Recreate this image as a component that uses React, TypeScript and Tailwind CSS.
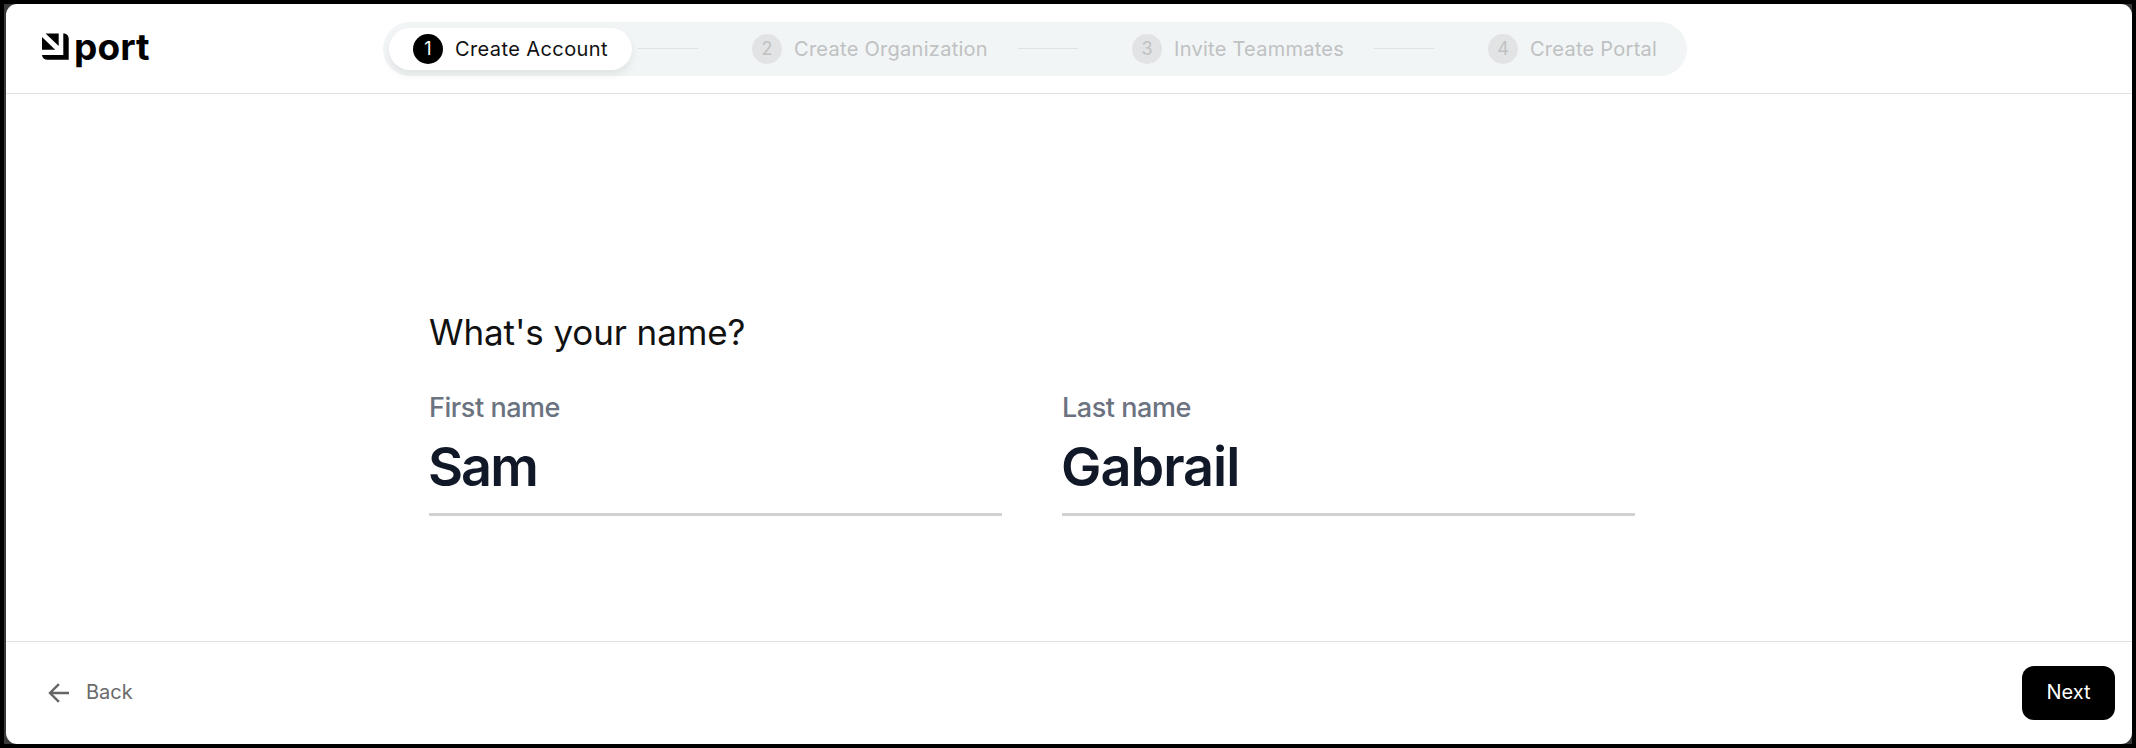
import { Fragment } from "react";

const steps = [
  { label: "Create Account", width: "w-[243px]", tracking: "tracking-[0.4px]" },
  { label: "Create Organization", width: "w-[284px]", tracking: "tracking-[0.28px]" },
  { label: "Invite Teammates", width: "w-[260px]", tracking: "tracking-[0.26px]" },
  { label: "Create Portal", width: "w-[217px]", tracking: "tracking-[0.26px]" },
];

function Logo() {
  return (
    <div className="flex h-10 w-[120px] shrink-0 items-start">
      <svg className="mt-[3px] h-7 w-7 shrink-0" viewBox="0 0 28 28" fill="#000">
        <path d="M3.6 0.4H16.7V12.9Z" />
        <path d="M0 4V16.7H13.2Z" />
        <path d="M21.3 0.3C24.3 0.4 26.7 2.6 26.7 5.6V26.8H5.3C2.4 26.8 0.3 24.8 0 21.9H21.3Z" />
      </svg>
      <span className="ml-1 mt-[-5.5px] text-[37px] leading-[44px] font-bold tracking-[0.1px] text-black">port</span>
    </div>
  );
}

function Stepper() {
  return (
    <ol className="mt-[18px] ml-[221px] flex h-[54px] items-center rounded-full bg-[#f1f5f6] p-1.5">
      {steps.map((step, index) => (
        <Fragment key={step.label}>
          <li
            className={`flex h-[42px] shrink-0 items-center gap-3 rounded-full pl-6 text-xl font-normal whitespace-nowrap ${step.width} ${
              index === 0 ? "bg-white text-[#111] shadow-[0_5px_8px_rgba(0,0,0,0.07)]" : "text-[#bfc1c2]"
            }`}
          >
            <span
              className={`flex size-[30px] shrink-0 items-center justify-center rounded-full text-lg ${
                index === 0 ? "bg-black text-white" : "bg-[#e2e3e4]"
              }`}
            >
              {index + 1}
            </span>
            <span className={step.tracking}>{step.label}</span>
          </li>
          {index < steps.length - 1 && <li aria-hidden className="mr-[30px] mb-px ml-1.5 h-px w-[60px] shrink-0 bg-[#e0e1e2]" />}
        </Fragment>
      ))}
    </ol>
  );
}

function Field({ label, value, tracking }: { label: string; value: string; tracking: string }) {
  return (
    <div className="flex w-[573px] flex-col border-b-[3px] border-[#d1d1d1] pb-3.5">
      <label className="text-[27px] leading-9 font-medium tracking-[-0.45px] text-[#6b7280]">{label}</label>
      <div className={`mt-[9px] -ml-px text-[54px] leading-[64px] font-semibold text-[#111827] ${tracking}`}>{value}</div>
    </div>
  );
}

export default function App() {
  return (
    <div className="h-[748px] w-[2136px] bg-black p-1 font-['Inter',sans-serif]">
      <div className="h-full bg-[#3a3a3a] pl-0.5">
        <div className="flex h-full flex-col overflow-hidden rounded-[11px] bg-white">
          <header className="flex h-[90px] shrink-0 items-start border-b border-[#e2e2e2] pl-9">
            <div className="mt-[26px]">
              <Logo />
            </div>
            <Stepper />
          </header>

          <main className="flex-1 pt-[216px] pl-[423px]">
            <h1 className="text-[35px] leading-[44px] font-normal tracking-[-0.1px] text-[#111]">What's your name?</h1>
            <div className="mt-9 flex gap-[60px]">
              <Field label="First name" value="Sam" tracking="tracking-[-2px]" />
              <Field label="Last name" value="Gabrail" tracking="tracking-[-1px]" />
            </div>
          </main>

          <footer className="flex h-[103px] shrink-0 items-center justify-between border-t border-[#e2e2e2] pr-[17px] pl-[42px]">
            <button className="flex items-center gap-[17px] text-xl font-normal text-[#6b6b6b]">
              <svg className="h-5 w-[21px]" viewBox="0 0 21 20" fill="none" stroke="#666" strokeWidth="2.4">
                <path d="M21 10H2.4M10.9 1.1L2 10L10.9 18.9" />
              </svg>
              <span className="-mt-0.5">Back</span>
            </button>
            <button className="h-[54px] w-[93px] rounded-xl bg-black pb-0.5 text-xl font-normal text-white">Next</button>
          </footer>
        </div>
      </div>
    </div>
  );
}
